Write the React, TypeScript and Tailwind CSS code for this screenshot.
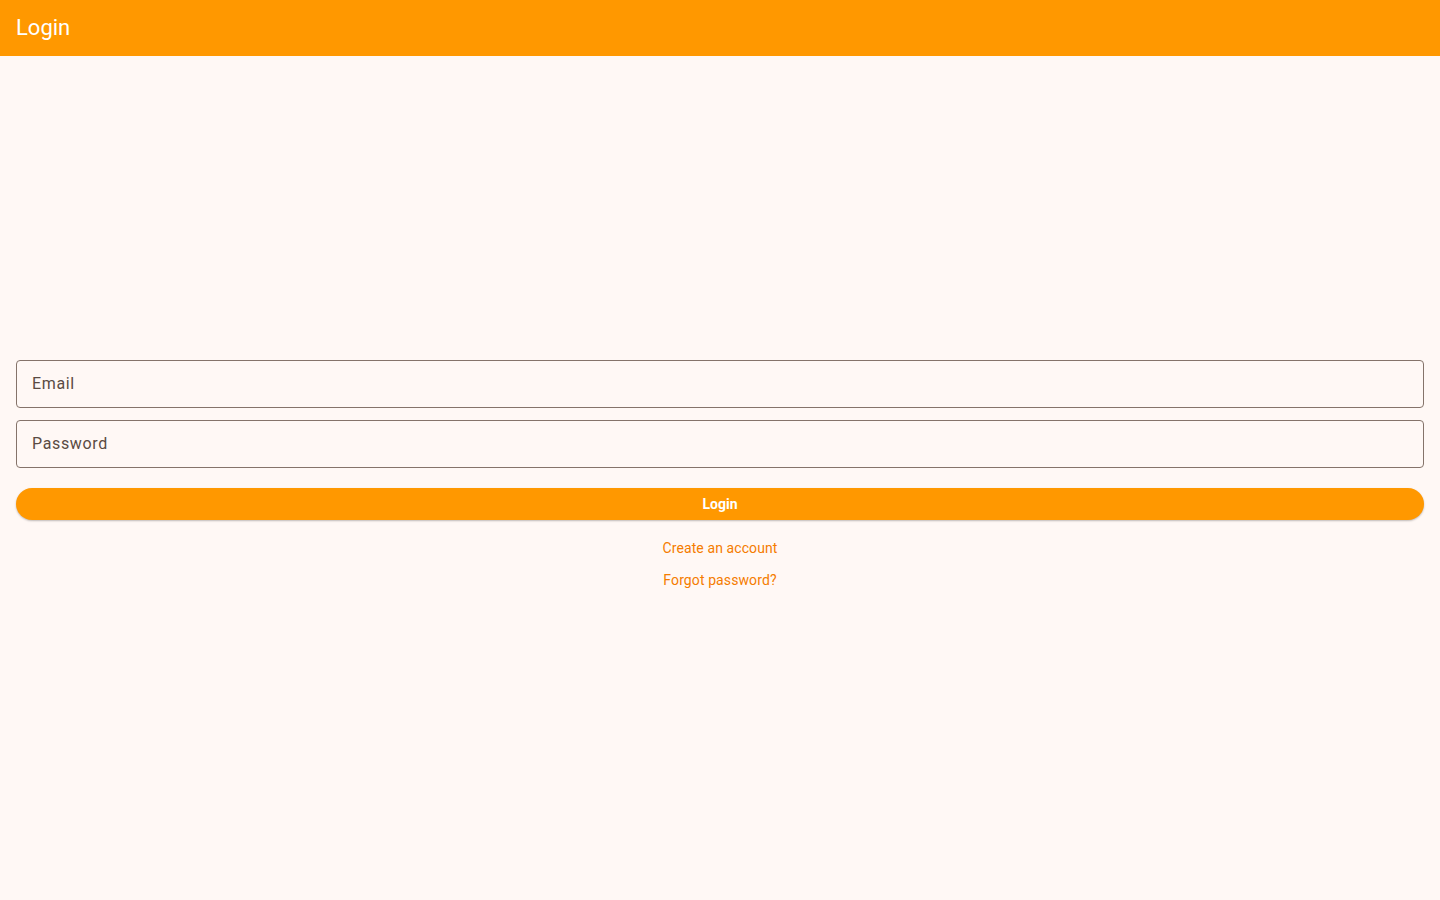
export default function App() {
  return (
    <div className="min-h-screen flex flex-col bg-[#fff8f5] font-['Roboto',sans-serif]">
      <header className="h-14 bg-[#ff9800] flex items-center px-4 pb-0.5 shrink-0">
        <h1 className="text-[22px] text-white font-normal">Login</h1>
      </header>

      <main className="px-4 pt-[304px]">
        <form className="flex flex-col" onSubmit={(e) => e.preventDefault()}>
          <input
            placeholder="Email"
            className="h-12 w-full rounded border border-[#85736a] bg-transparent pl-[15px] pr-4 pb-0.5 text-base tracking-[0.65px] text-[#52443c] placeholder:text-[#5a4b43] outline-none"
          />
          <input
            type="password"
            placeholder="Password"
            className="mt-3 h-12 w-full rounded border border-[#85736a] bg-transparent pl-[15px] pr-4 pb-0.5 text-base tracking-[0.65px] text-[#52443c] placeholder:text-[#5a4b43] outline-none"
          />
          <button
            type="submit"
            className="mt-5 h-8 w-full rounded-full bg-[#ff9800] text-sm font-bold text-white shadow-[0_1px_2px_rgba(0,0,0,0.25)]"
          >
            Login
          </button>
          <div className="mt-3 flex flex-col items-center">
            <a className="h-8 flex items-center text-sm tracking-[0.1px] text-[#f57c00] cursor-pointer">Create an account</a>
            <a className="h-8 flex items-center text-sm tracking-[0.1px] text-[#f57c00] cursor-pointer">Forgot password?</a>
          </div>
        </form>
      </main>
    </div>
  );
}
